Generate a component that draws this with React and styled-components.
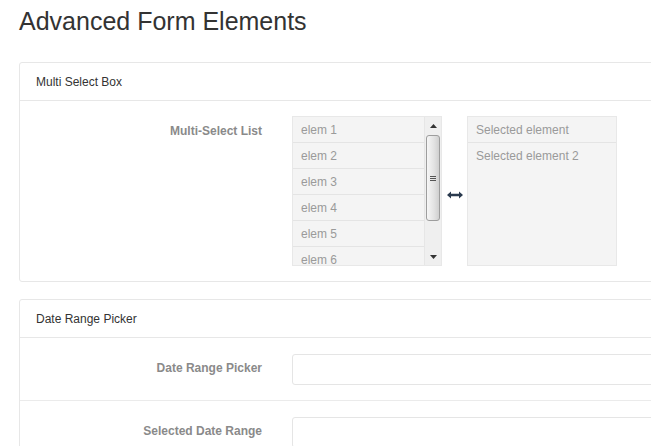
import React from 'react';
import styled, { createGlobalStyle } from 'styled-components';

const GlobalStyle = createGlobalStyle`
  html, body {
    margin: 0;
    padding: 0;
    overflow: hidden;
    background: #fff;
    font-family: "Liberation Sans", Arial, sans-serif;
  }
`;

const Page = styled.div`
  padding: 8px 0 0 19px;
  width: 720px;
`;

const Title = styled.h3`
  margin: 0 0 27px;
  font-size: 25px;
  font-weight: 400;
  line-height: 27px;
  color: #333;
`;

const Card = styled.section`
  border: 1px solid #e7e7e7;
  border-radius: 3px;
  margin-bottom: 17px;
`;

const CardHeader = styled.div`
  height: 37px;
  display: flex;
  align-items: center;
  padding: 0 16px;
  border-bottom: 1px solid #e7e7e7;
  font-size: 12px;
  color: #333;
`;

const FormRow = styled.div`
  display: grid;
  grid-template-columns: 242px 1fr;
  column-gap: 30px;
  padding: 15px 15px 15px 0;
  border-bottom: ${({ divided }) => (divided ? '1px solid #ebebeb' : 'none')};
`;

const Label = styled.label`
  padding-top: 7px;
  line-height: 17px;
  font-size: 12px;
  font-weight: 700;
  color: #8a8a8a;
  text-align: right;
`;

const Input = styled.input`
  box-sizing: border-box;
  height: 31px;
  width: 100%;
  margin-top: 1px;
  border: 1px solid #e5e5e5;
  border-radius: 3px;
  background: #fff;
  outline: none;
`;

const DualList = styled.div`
  display: flex;
  align-items: center;
`;

const ListBox = styled.div`
  box-sizing: border-box;
  width: 150px;
  height: 150px;
  display: flex;
  border: 1px solid #e8e8e8;
  background: #f4f4f4;
  overflow: hidden;
`;

const Items = styled.ul`
  flex: 1;
  margin: 0;
  padding: 0;
  list-style: none;
  overflow: hidden;
`;

const Item = styled.li`
  box-sizing: border-box;
  height: 26px;
  line-height: 27px;
  padding-left: 8px;
  font-size: 12px;
  color: #9a9a9a;
  border-bottom: ${({ last }) => (last ? 'none' : '1px solid #e4e4e4')};
`;

const Scrollbar = styled.div`
  width: 16px;
  display: flex;
  flex-direction: column;
  align-items: center;
  background: #efefef;
  border-left: 1px solid #e6e6e6;
`;

const ArrowBtn = styled.div`
  height: 17px;
  width: 100%;
  display: flex;
  align-items: center;
  justify-content: center;
`;

const Thumb = styled.div`
  box-sizing: border-box;
  width: 14px;
  height: 86px;
  margin-top: 1px;
  border: 1px solid #9d9d9d;
  border-radius: 3px;
  background: linear-gradient(to right, #f6f6f6, #e2e2e2 60%, #cfcfcf);
  display: flex;
  flex-direction: column;
  align-items: center;
  justify-content: center;
  gap: 1px;
`;

const Grip = styled.span`
  width: 6px;
  height: 1px;
  background: #555;
`;

const Spacer = styled.div`
  flex: 1;
`;

const SwapIcon = styled.div`
  width: 25px;
  margin-top: 7px;
  display: flex;
  justify-content: center;
`;

const upArrow = (
  <svg width="7" height="4" viewBox="0 0 7 4">
    <path d="M0 4 L3.5 0 L7 4 Z" fill="#333" />
  </svg>
);

const downArrow = (
  <svg width="7" height="4" viewBox="0 0 7 4">
    <path d="M0 0 L7 0 L3.5 4 Z" fill="#333" />
  </svg>
);

const elems = ['elem 1', 'elem 2', 'elem 3', 'elem 4', 'elem 5', 'elem 6'];
const selected = ['Selected element', 'Selected element 2'];

export default function App() {
  return (
    <>
      <GlobalStyle />
      <Page>
        <Title>Advanced Form Elements</Title>

        <Card>
          <CardHeader>Multi Select Box</CardHeader>
          <FormRow>
            <Label>Multi-Select List</Label>
            <DualList>
              <ListBox>
                <Items>
                  {elems.map((e, i) => (
                    <Item key={e} last={i === elems.length - 1}>
                      {e}
                    </Item>
                  ))}
                </Items>
                <Scrollbar>
                  <ArrowBtn>{upArrow}</ArrowBtn>
                  <Thumb>
                    <Grip />
                    <Grip />
                    <Grip />
                  </Thumb>
                  <Spacer />
                  <ArrowBtn>{downArrow}</ArrowBtn>
                </Scrollbar>
              </ListBox>
              <SwapIcon>
                <svg width="16" height="8" viewBox="0 0 16 8">
                  <path
                    d="M0 4 L4 0.5 L4 2.8 L12 2.8 L12 0.5 L16 4 L12 7.5 L12 5.2 L4 5.2 L4 7.5 Z"
                    fill="#2a3a4e"
                  />
                </svg>
              </SwapIcon>
              <ListBox>
                <Items>
                  {selected.map((s, i) => (
                    <Item key={s} last={i === selected.length - 1}>
                      {s}
                    </Item>
                  ))}
                </Items>
              </ListBox>
            </DualList>
          </FormRow>
        </Card>

        <Card>
          <CardHeader>Date Range Picker</CardHeader>
          <FormRow divided>
            <Label>Date Range Picker</Label>
            <Input type="text" />
          </FormRow>
          <FormRow>
            <Label>Selected Date Range</Label>
            <Input type="text" />
          </FormRow>
        </Card>
      </Page>
    </>
  );
}
